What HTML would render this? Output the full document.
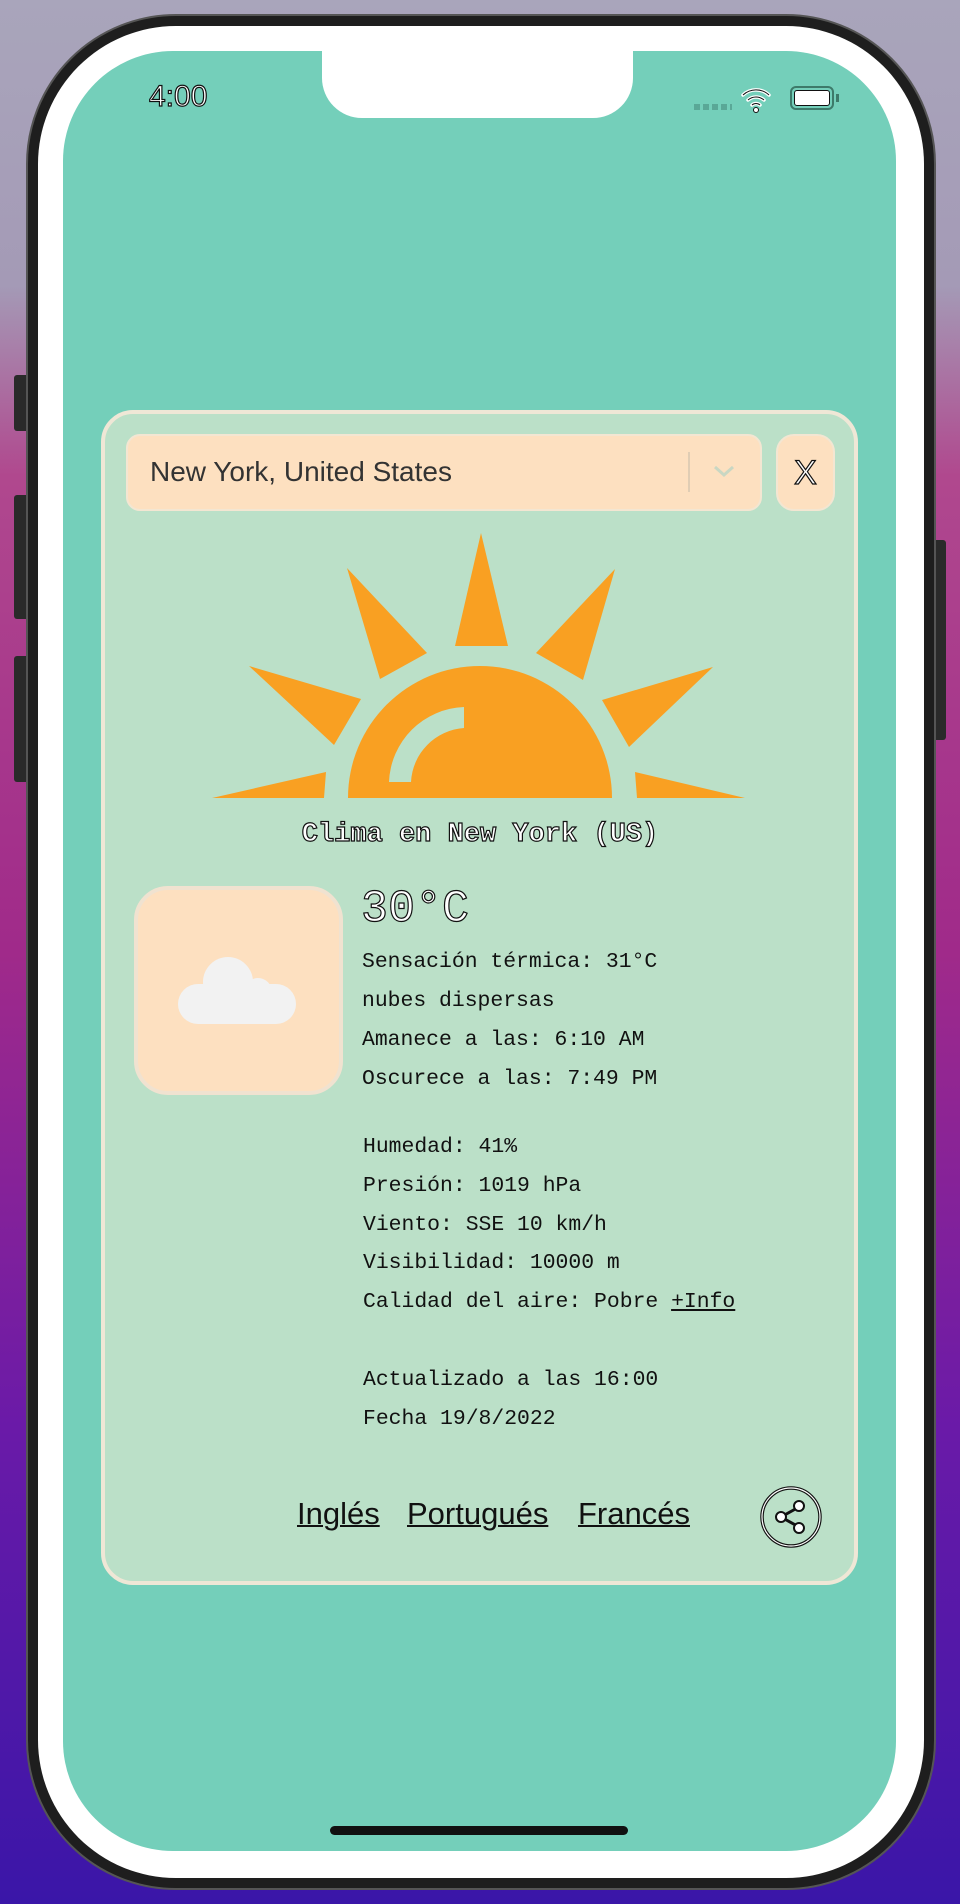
<!DOCTYPE html>
<html><head><meta charset="utf-8">
<style>
*{margin:0;padding:0;box-sizing:border-box}
html,body{width:960px;height:1904px;overflow:hidden}
body{position:relative;background:linear-gradient(180deg,#a9a5bb 0%,#a49ab6 15%,#b0488e 25%,#a02a8a 50%,#6a1aa8 75%,#3a16a8 100%);font-family:"Liberation Sans",sans-serif}
.abs{position:absolute}
.frame{left:26px;top:14px;width:910px;height:1876px;border-radius:150px;background:#1e1e1e;border:2px solid #555}
.bezel{left:38px;top:26px;width:886px;height:1852px;border-radius:138px;background:#fff}
.screen{left:63px;top:51px;width:833px;height:1800px;border-radius:110px;background:#74cfba}
.notch{left:322px;top:40px;width:311px;height:78px;background:#fff;border-radius:0 0 40px 40px}
.mono{font-family:"Liberation Mono","DejaVu Sans Mono",monospace;color:#111}
.out{color:#fff;-webkit-text-stroke:1.2px #111}
.card{left:101px;top:410px;width:757px;height:1175px;border-radius:32px;background:#bbe0c8;border:4px solid #efe7d6}
.dd{left:126px;top:434px;width:636px;height:77px;border-radius:14px;background:#fde0c0;border:2px solid #f3e6d2}
.xb{left:776px;top:434px;width:59px;height:77px;border-radius:18px;background:#fde0c0;border:2px solid #f3e6d2;font-size:34px;text-align:center;line-height:74px}
.ib{left:134px;top:886px;width:209px;height:209px;border-radius:34px;background:#fde0c0;border:4px solid #f0e2d0}
.line{left:362px;font-size:21.4px;line-height:28px;white-space:pre}
.lk{font-size:31px;color:#111;text-decoration:underline;text-decoration-thickness:2px;top:1496px}
</style></head><body>
<div class="abs" style="left:14px;top:375px;width:16px;height:56px;background:#2a2a2a;border-radius:3px"></div>
<div class="abs" style="left:14px;top:495px;width:16px;height:124px;background:#2a2a2a;border-radius:3px"></div>
<div class="abs" style="left:14px;top:656px;width:16px;height:126px;background:#2a2a2a;border-radius:3px"></div>
<div class="abs" style="left:932px;top:540px;width:14px;height:200px;background:#2a2a2a;border-radius:3px"></div>
<div class="abs frame"></div>
<div class="abs bezel"></div>
<div class="abs screen"></div>
<div class="abs notch"></div>
<div class="abs out" style="left:149px;top:80px;font-size:30px;font-family:'Liberation Sans',sans-serif">4:00</div>
<div class="abs" style="left:694px;top:104px;width:38px;height:6px;background:repeating-linear-gradient(90deg,#5aa897 0 6px,transparent 6px 9px)"></div>
<svg class="abs" style="left:740px;top:84px" width="32" height="30" viewBox="0 0 32 30"><path d="M3 11a19 19 0 0 1 26 0M8 16a12 12 0 0 1 16 0M12 21a6 6 0 0 1 8 0" stroke="#fff" stroke-width="3.5" fill="none" stroke-linecap="round"/><path d="M3 11a19 19 0 0 1 26 0M8 16a12 12 0 0 1 16 0M12 21a6 6 0 0 1 8 0" stroke="#111" stroke-width="1" fill="none"/><circle cx="16" cy="26" r="2.5" fill="#fff" stroke="#111"/></svg>
<div class="abs" style="left:790px;top:86px;width:44px;height:24px;border:2px solid #3d7a6a;border-radius:6px;background:#74cfba"><div style="margin:2px;height:16px;background:#fff;border:1px solid #111;border-radius:3px"></div></div>
<div class="abs" style="left:836px;top:94px;width:3px;height:8px;background:#3d7a6a"></div>

<div class="abs card"></div>
<div class="abs dd"><span style="position:absolute;left:22px;top:20px;font-size:28px;color:#333">New York, United States</span><div style="position:absolute;left:560px;top:16px;width:2px;height:40px;background:#e0cdb4"></div><svg style="position:absolute;left:584px;top:28px" width="24" height="16"><path d="M3 3l9 8 9-8" stroke="#c9d7c3" stroke-width="3" fill="none"/></svg></div>
<div class="abs xb out">X</div>

<svg class="abs" style="left:0;top:0" width="960" height="900">
<g fill="#f9a022">
<path d="M348 798A132 132 0 0 1 612 798Z"/>
<path d="M481 533L455 646L508 646Z"/>
<path d="M347 568L427 653L380 679Z"/>
<path d="M615 569L536 653L583 680Z"/>
<path d="M249 666L361 699L334 745Z"/>
<path d="M713 667L602 700L629 747Z"/>
<path d="M212 798L326 772L324 798Z"/>
<path d="M745 798L635 772L637 798Z"/>
</g>
<path d="M389 782A78 78 0 0 1 464 707L464 728A57 57 0 0 0 411 782Z" fill="#bbe0c8"/>
</svg>

<div class="abs mono out" style="left:0;width:960px;text-align:center;top:820px;font-size:27px;font-weight:bold">Clima en New York (US)</div>
<div class="abs ib"><svg style="position:absolute;left:38px;top:60px" width="124" height="80" viewBox="0 0 124 80"><g fill="#f2f2f2"><circle cx="52" cy="32" r="25"/><circle cx="82" cy="42" r="14"/><rect x="2" y="34" width="118" height="40" rx="20"/></g></svg></div>
<div class="abs mono out" style="left:361px;top:884px;font-size:45px">30°C</div>
<div class="abs mono line" style="top:948px">Sensación térmica: 31°C</div>
<div class="abs mono line" style="top:987px">nubes dispersas</div>
<div class="abs mono line" style="top:1026px">Amanece a las: 6:10 AM</div>
<div class="abs mono line" style="top:1065px">Oscurece a las: 7:49 PM</div>
<div class="abs mono line" style="left:363px;top:1133px">Humedad: 41%</div>
<div class="abs mono line" style="left:363px;top:1172px">Presión: 1019 hPa</div>
<div class="abs mono line" style="left:363px;top:1211px">Viento: SSE 10 km/h</div>
<div class="abs mono line" style="left:363px;top:1249px">Visibilidad: 10000 m</div>
<div class="abs mono line" style="left:363px;top:1288px">Calidad del aire: Pobre <u>+Info</u></div>
<div class="abs mono line" style="left:363px;top:1366px">Actualizado a las 16:00</div>
<div class="abs mono line" style="left:363px;top:1405px">Fecha 19/8/2022</div>
<div class="abs lk" style="left:297px">Inglés</div>
<div class="abs lk" style="left:407px">Portugués</div>
<div class="abs lk" style="left:578px">Francés</div>
<svg class="abs" style="left:759px;top:1485px" width="64" height="64" viewBox="0 0 64 64"><circle cx="32" cy="32" r="29" fill="none" stroke="#111" stroke-width="3.5"/><circle cx="32" cy="32" r="29" fill="none" stroke="#fff" stroke-width="1.2"/><path d="M40 22L22 32L40 42" stroke="#111" stroke-width="3" fill="none"/><circle cx="40" cy="21" r="5" fill="#fff" stroke="#111" stroke-width="2"/><circle cx="22" cy="32" r="5" fill="#fff" stroke="#111" stroke-width="2"/><circle cx="40" cy="43" r="5" fill="#fff" stroke="#111" stroke-width="2"/></svg>
<div class="abs" style="left:330px;top:1826px;width:298px;height:9px;border-radius:5px;background:#111"></div>
</body></html>
